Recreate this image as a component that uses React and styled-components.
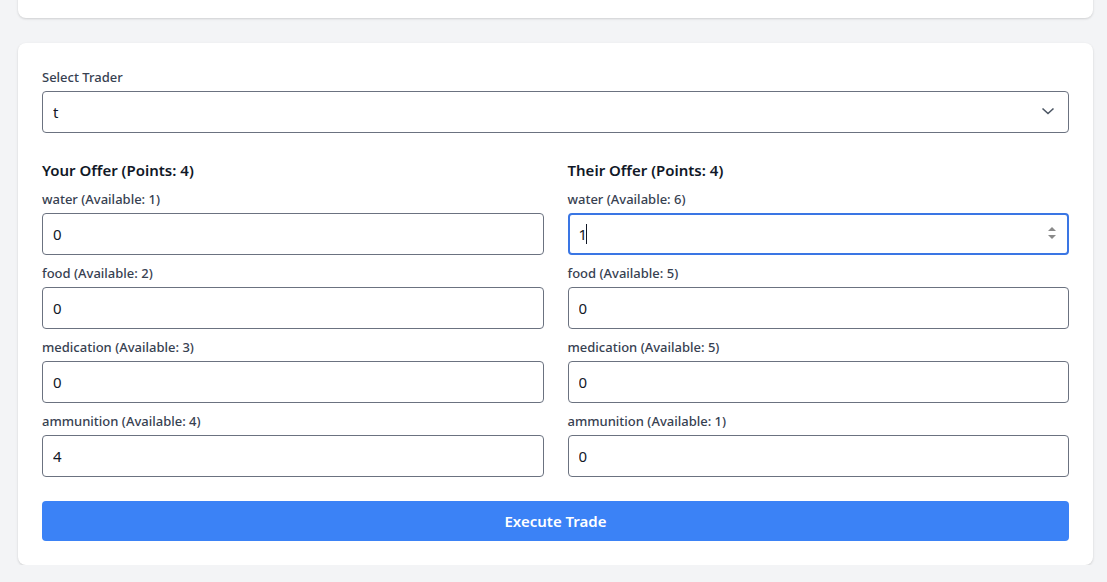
import React from "react";
import styled, { createGlobalStyle, css } from "styled-components";

const GlobalStyle = createGlobalStyle`
  * { box-sizing: border-box; }
  html, body {
    margin: 0;
    background: #f3f4f6;
    font-family: "Segoe UI", "Noto Sans", "Open Sans", sans-serif;
    color: #111827;
  }
`;

const Page = styled.div`
  padding: 0 14px 0 18px;
  display: flex;
  flex-direction: column;
  gap: 25px;
`;

const Card = styled.div`
  background: #ffffff;
  border-radius: 8px;
  box-shadow: 0 1px 3px rgba(0, 0, 0, 0.1), 0 1px 2px rgba(0, 0, 0, 0.06);
  padding: 24px;
`;

const TopCard = styled(Card)`
  margin-top: -40px;
  height: 58px;
`;

const Label = styled.label`
  display: block;
  font-size: 13px;
  line-height: 20px;
  font-weight: 500;
  color: #374151;
  margin-bottom: 4px;
`;

const SelectWrap = styled.div`
  position: relative;
  margin-bottom: 25px;
`;

const Select = styled.select`
  appearance: none;
  width: 100%;
  height: 42px;
  border: 1px solid #6b7280;
  border-radius: 4px;
  background: #fff;
  padding: 0 10px;
  font: inherit;
  font-size: 15px;
  color: #111827;
  outline: none;
`;

const Chevron = styled.svg`
  position: absolute;
  right: 14px;
  top: 15px;
  pointer-events: none;
`;

const Columns = styled.div`
  display: grid;
  grid-template-columns: 1fr 1fr;
  column-gap: 24px;
`;

const Heading = styled.h3`
  margin: 0 0 7px;
  font-size: 15px;
  line-height: 24px;
  font-weight: 600;
  color: #111827;
`;

const Field = styled.div`
  position: relative;
  margin-bottom: 8px;
`;

const InputBox = styled.div`
  position: relative;
`;

const Input = styled.input`
  width: 100%;
  height: 42px;
  border: 1px solid #6b7280;
  border-radius: 4px;
  background: #fff;
  padding: 0 10px;
  font: inherit;
  font-size: 15px;
  color: #111827;
  outline: none;

  ${(p) =>
    p.$focused &&
    css`
      border: 2px solid #3a76e4;
      padding: 0 9px;
      caret-color: transparent;
    `}
`;

const Caret = styled.span`
  position: absolute;
  left: 18px;
  top: 11px;
  width: 1px;
  height: 20px;
  background: #111827;
  pointer-events: none;
`;

const Spinner = styled.svg`
  position: absolute;
  right: 12px;
  top: 13px;
  pointer-events: none;
`;

const Button = styled.button`
  margin-top: 16px;
  width: 100%;
  height: 40px;
  border: none;
  border-radius: 4px;
  background: #3b82f6;
  color: #fff;
  font: inherit;
  font-size: 15px;
  font-weight: 600;
`;

const yours = [
  { name: "water", available: 1, value: "0" },
  { name: "food", available: 2, value: "0" },
  { name: "medication", available: 3, value: "0" },
  { name: "ammunition", available: 4, value: "4" },
];

const theirs = [
  { name: "water", available: 6, value: "1", focused: true },
  { name: "food", available: 5, value: "0" },
  { name: "medication", available: 5, value: "0" },
  { name: "ammunition", available: 1, value: "0" },
];

const OfferColumn = ({ title, items }) => (
  <div>
    <Heading>{title}</Heading>
    {items.map((item) => (
      <Field key={item.name}>
        <Label>
          {item.name} (Available: {item.available})
        </Label>
        <InputBox>
          <Input type="text" defaultValue={item.value} $focused={item.focused} />
          {item.focused && (
            <>
              <Caret />
              <Spinner width="10" height="14" viewBox="0 0 10 14">
                <path d="M5 1 L9 5 H1 Z" fill="#8a8a8a" />
                <path d="M5 13 L9 9 H1 Z" fill="#8a8a8a" />
              </Spinner>
            </>
          )}
        </InputBox>
      </Field>
    ))}
  </div>
);

export default function App() {
  return (
    <>
      <GlobalStyle />
      <Page>
        <TopCard />
        <Card>
          <Label>Select Trader</Label>
          <SelectWrap>
            <Select defaultValue="t">
              <option value="t">t</option>
            </Select>
            <Chevron width="14" height="10" viewBox="0 0 14 10">
              <path
                d="M1.5 2.5 L7 7.5 L12.5 2.5"
                fill="none"
                stroke="#4b5563"
                strokeWidth="1.6"
              />
            </Chevron>
          </SelectWrap>
          <Columns>
            <OfferColumn title="Your Offer (Points: 4)" items={yours} />
            <OfferColumn title="Their Offer (Points: 4)" items={theirs} />
          </Columns>
          <Button>Execute Trade</Button>
        </Card>
      </Page>
    </>
  );
}
